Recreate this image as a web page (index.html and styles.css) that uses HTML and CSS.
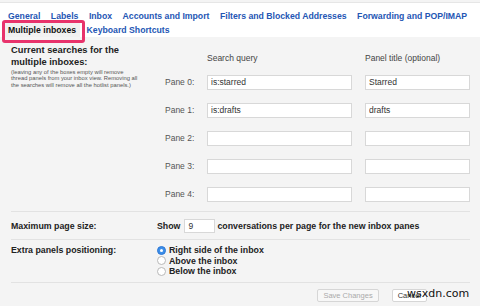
FILE: index.html
```html
<!DOCTYPE html>
<html lang="en">
<head>
    <meta charset="UTF-8">
    <title>Settings - Multiple inboxes</title>
    <link rel="stylesheet" href="styles.css">
</head>
<body>
<div class="tabs">
    <div class="tab-row">
        <a class="tab">General</a>
        <a class="tab">Labels</a>
        <a class="tab">Inbox</a>
        <a class="tab">Accounts and Import</a>
        <a class="tab">Filters and Blocked Addresses</a>
        <a class="tab">Forwarding and POP/IMAP</a>
    </div>
    <div class="tab-row">
        <a class="tab active">Multiple inboxes</a>
        <a class="tab">Keyboard Shortcuts</a>
        <!-- highlight drawn over the selected tab -->
        <span class="highlight"></span>
    </div>
</div>

<div class="content">
    <div class="section searches">
        <div class="side">
            <div class="side-title">Current searches for the multiple inboxes:</div>
            <div class="side-note">(leaving any of the boxes empty will remove<br>thread panels from your inbox view. Removing all<br>the searches will remove all the hotlist panels.)</div>
        </div>
        <div class="panes">
            <span></span>
            <span class="col-head">Search query</span>
            <span class="col-head">Panel title (optional)</span>

            <label class="pane-label">Pane 0:</label>
            <input class="field query" type="text" value="is:starred">
            <input class="field title" type="text" value="Starred">

            <label class="pane-label">Pane 1:</label>
            <input class="field query" type="text" value="is:drafts">
            <input class="field title" type="text" value="drafts">

            <label class="pane-label">Pane 2:</label>
            <input class="field query" type="text">
            <input class="field title" type="text">

            <label class="pane-label">Pane 3:</label>
            <input class="field query" type="text">
            <input class="field title" type="text">

            <label class="pane-label">Pane 4:</label>
            <input class="field query" type="text">
            <input class="field title" type="text">
        </div>
    </div>

    <div class="section page-size">
        <div class="side-label">Maximum page size:</div>
        <div class="option">
            <span class="bold">Show</span>
            <input class="field size" type="text" value="9">
            <span class="bold">conversations per page for the new inbox panes</span>
        </div>
    </div>

    <div class="section positioning">
        <div class="side-label">Extra panels positioning:</div>
        <div class="radios">
            <div class="radio-row"><span class="radio on"></span>Right side of the inbox</div>
            <div class="radio-row"><span class="radio"></span>Above the inbox</div>
            <div class="radio-row"><span class="radio"></span>Below the inbox</div>
        </div>
    </div>

    <div class="actions">
        <button class="btn" disabled>Save Changes</button>
        <button class="btn">Cancel</button>
    </div>
</div>

<div class="watermark">wsxdn.com</div>
</body>
</html>
```

FILE: styles.css
```css
body {
    font-family: 'Liberation Sans', Arial, sans-serif;
    margin: 0;
    background-color: #f4f4f4;
    color: #222;
    position: relative;
    height: 306px;
    overflow: hidden;
}

/* tabs */
.tabs {
    background: white;
    margin-top: 2px;
    border-top: 1px solid #e6e6e6;
    padding: 6px 0 0 8px;
}

.tab-row {
    display: flex;
    gap: 10.5px;
    height: 14px;
    line-height: 14px;
    position: relative;
}

.tab {
    font-size: 8.7px;
    font-weight: bold;
    color: #2456b4;
    white-space: nowrap;
}

.tab.active {
    color: #111;
    background: #f1f1f1;
    margin-left: -4px;
    margin-right: -4px;
    padding: 0 4px;
}

.highlight {
    position: absolute;
    left: -6px;
    top: -3px;
    width: 77px;
    height: 17px;
    border: 3px solid #e8336c;
    border-radius: 3px;
}

/* main area */
.content {
    padding: 0 10px 0 11px;
}

.section {
    display: flex;
    border-bottom: 1px solid #e2e2e2;
}

.side {
    width: 146px;
    flex-shrink: 0;
    padding-top: 7px;
}

.side-title {
    font-size: 9.3px;
    font-weight: bold;
    line-height: 12px;
    color: #222;
}

.side-note {
    font-size: 5.8px;
    line-height: 6.3px;
    color: #555;
    margin-top: 1px;
    white-space: nowrap;
}

.panes {
    display: grid;
    grid-template-columns: 29px 145px 105px;
    grid-template-rows: 31px repeat(5, 28px);
    column-gap: 13px;
    align-items: center;
    padding: 0 0 3px 8px;
}

.col-head {
    font-size: 8.5px;
    color: #444;
    align-self: end;
    padding-bottom: 5px;
    white-space: nowrap;
}

.pane-label {
    font-size: 8.5px;
    color: #555;
    white-space: nowrap;
}

.field {
    box-sizing: border-box;
    height: 15px;
    border: 1px solid #d8d8d8;
    background: white;
    font-family: 'Liberation Sans', Arial, sans-serif;
    font-size: 8.5px;
    color: #333;
    padding: 0 3px;
    margin: 0;
    outline: none;
}

.query {
    width: 145px;
}

.title {
    width: 105px;
}

.side-label {
    width: 146px;
    flex-shrink: 0;
    font-size: 8.8px;
    font-weight: bold;
}

.bold {
    font-weight: bold;
}

.page-size {
    height: 27px;
    align-items: center;
    font-size: 8.8px;
}

.option {
    display: flex;
    align-items: center;
}

.size {
    width: 31px;
    height: 14px;
    margin: 0 2px 0 4px;
}

.positioning {
    height: 43px;
    padding-top: 5px;
    box-sizing: border-box;
    font-size: 8.8px;
}

.positioning .side-label {
    line-height: 11px;
}

.radios {
    font-weight: bold;
}

.radio-row {
    display: flex;
    align-items: center;
    height: 10.5px;
}

.radio {
    box-sizing: border-box;
    width: 9px;
    height: 9px;
    border-radius: 50%;
    border: 1px solid #b8b8b8;
    background: white;
    margin-right: 3px;
    position: relative;
}

.radio.on {
    background: #3b8eea;
    border-color: #2f78d4;
}

.radio.on::after {
    content: "";
    position: absolute;
    left: 2px;
    top: 2px;
    width: 3px;
    height: 3px;
    border-radius: 50%;
    background: white;
}

.actions {
    display: flex;
    justify-content: flex-end;
    gap: 13px;
    padding: 6px 43px 0 0;
}

.btn {
    height: 13px;
    padding: 0 5px;
    font-family: 'Liberation Sans', Arial, sans-serif;
    font-size: 7.5px;
    color: #333;
    background: white;
    border: 1px solid #d6d6d6;
    border-radius: 2px;
}

.btn:disabled {
    color: #aaa;
    background: #f7f7f7;
}

.watermark {
    position: absolute;
    left: 407px;
    top: 287px;
    font-family: 'DejaVu Sans', sans-serif;
    font-size: 11px;
    color: #111;
}
```
